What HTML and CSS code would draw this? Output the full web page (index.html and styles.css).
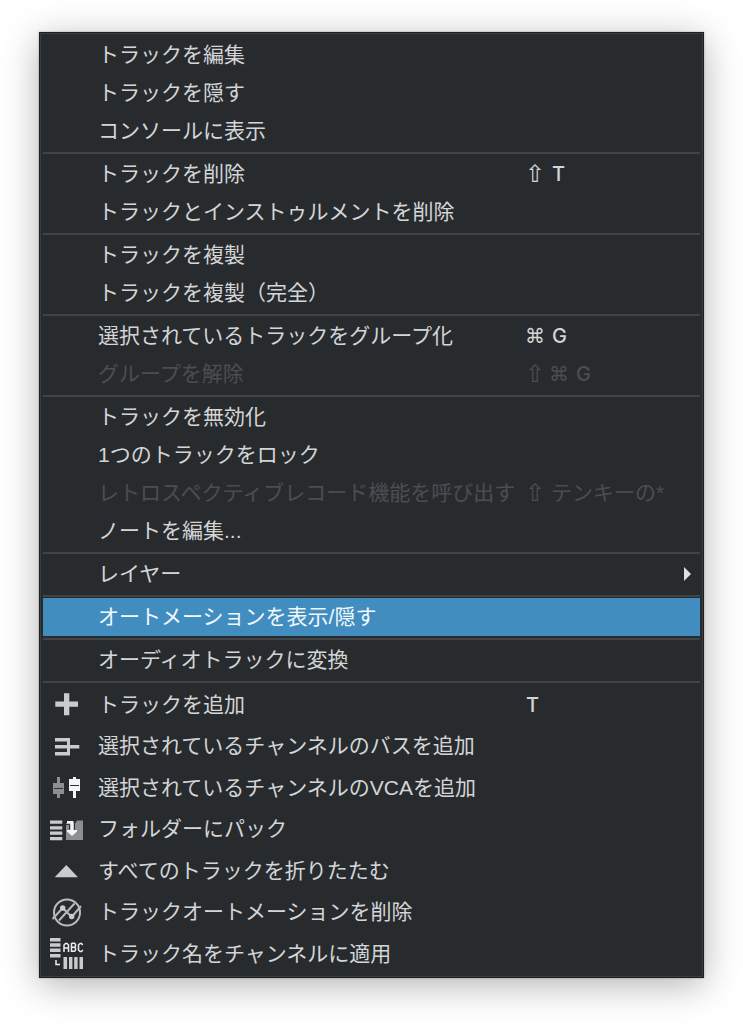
FILE: index.html
```html
<!DOCTYPE html>
<html lang="ja">
<head>
<meta charset="utf-8">
<meta name="viewport" content="width=device-width, initial-scale=1">
<title>トラックメニュー</title>
<link rel="stylesheet" href="styles.css">
</head>
<body>
<main class="menu">
  <section class="group">
    <button class="item"><span class="label">トラックを編集</span></button>
    <button class="item"><span class="label">トラックを隠す</span></button>
    <button class="item"><span class="label">コンソールに表示</span></button>
  </section>
  <section class="group">
    <button class="item"><span class="label">トラックを削除</span><span class="keys"><span class="sym shift">⇧</span><span class="key">T</span></span></button>
    <button class="item"><span class="label">トラックとインストゥルメントを削除</span></button>
  </section>
  <section class="group">
    <button class="item"><span class="label">トラックを複製</span></button>
    <button class="item"><span class="label">トラックを複製（完全）</span></button>
  </section>
  <section class="group">
    <button class="item"><span class="label">選択されているトラックをグループ化</span><span class="keys"><span class="sym">⌘</span><span class="key">G</span></span></button>
    <button class="item" disabled><span class="label">グループを解除</span><span class="keys"><span class="sym shift">⇧</span><span class="sym">⌘</span><span class="key">G</span></span></button>
  </section>
  <section class="group">
    <button class="item"><span class="label">トラックを無効化</span></button>
    <button class="item"><span class="label">1つのトラックをロック</span></button>
    <button class="item" disabled><span class="label">レトロスペクティブレコード機能を呼び出す</span><span class="keys"><span class="sym shift">⇧</span><span>テンキーの*</span></span></button>
    <button class="item"><span class="label">ノートを編集...</span></button>
  </section>
  <section class="group">
    <button class="item"><span class="label">レイヤー</span><svg class="arrow" viewBox="0 0 7 14" aria-hidden="true"><path d="M0 0L7 7L0 14Z"/></svg></button>
  </section>
  <section class="group">
    <button class="item selected"><span class="label">オートメーションを表示/隠す</span></button>
  </section>
  <section class="group">
    <button class="item"><span class="label">オーディオトラックに変換</span></button>
  </section>
  <section class="group tools">
    <button class="item">
      <svg class="icon" viewBox="0 0 44 41" aria-hidden="true"><path d="M21 9.3h5.3v8.2H35v5.3h-8.7v8.5H21v-8.5h-8.7v-5.3H21z"/></svg>
      <span class="label">トラックを追加</span><span class="keys"><span class="key">T</span></span></button>
    <button class="item">
      <svg class="icon" viewBox="0 0 44 41" aria-hidden="true"><path d="M12 12h15v7h9.300v3.500H27V29.500H12V26h12v-3.500H12V19h12v-3.500H12z"/></svg>
      <span class="label">選択されているチャンネルのバスを追加</span></button>
    <button class="item">
      <svg class="icon" viewBox="0 0 44 41" aria-hidden="true"><path class="mid" d="M14 10h3v6h4v11h-4v4h-3v-4h-4V16h4z"/><path class="white" d="M30 10h3v2h4v12h-4v7h-3v-7h-4V12h4z"/><path class="cut" d="M11 21.500h9M27 18.500h9"/></svg>
      <span class="label">選択されているチャンネルのVCAを追加</span></button>
    <button class="item">
      <svg class="icon" viewBox="0 0 44 41" aria-hidden="true"><path d="M7 11.500h12.300v3.200H7zM7 17.200h12.300v3.200H7zM7 22.600h12.300v3.200H7zM7 28h12.300v3.200H7z"/><path class="mid" d="M23 14h9.500l1.500-2.500h6V31H23z"/><path class="cut" d="M23 15.500h3.500v5M31.500 11v10"/><path class="white" d="M24 12h6.500v9H34v1.500L29 27l-5-4.500V21h3.500v-6.500H24z"/></svg>
      <span class="label">フォルダーにパック</span></button>
    <button class="item">
      <svg class="icon" viewBox="0 0 44 41" aria-hidden="true"><path d="M11.7 27.3L23.3 15L35 27.3Z"/></svg>
      <span class="label">すべてのトラックを折りたたむ</span></button>
    <button class="item">
      <svg class="icon" viewBox="0 0 44 41" aria-hidden="true"><circle class="ring" cx="24" cy="20.500" r="13"/><path class="line" d="M9.500 27L19.700 16L28.700 25L38 14M16 28.500L31.500 11.500"/><circle cx="19.700" cy="16" r="2.700"/><circle cx="28.700" cy="24.500" r="2.700"/></svg>
      <span class="label">トラックオートメーションを削除</span></button>
    <button class="item">
      <svg class="icon" viewBox="0 0 44 41" aria-hidden="true"><path d="M7 5h10.500v3.400H7zM7 10.300h10.500v3.400H7zM7 15.600h10.500v3.400H7zM7 21h10.500v3.400H7zM20.500 24h3.600v12h-3.600zM26 24h3.400v12H26zM31.200 24h3.400v12h-3.400zM36.500 24H40v12h-3.500z"/><path class="pixel" d="M13 27v4.500h4M21 19v-7l1.500-1.500h1.500l1.500 1.500V19M21 15h4.500M28.500 10v8.300h3l1-1v-2l-1-1l1-1v-2l-1-1h-3M28.500 14.300h3M39.800 12L38.500 10.500h-1.500l-1.500 1.500v5l1.500 1.500h1.500l1.300-1.500"/></svg>
      <span class="label">トラック名をチャンネルに適用</span></button>
  </section>
</main>
</body>
</html>
```
FILE: styles.css
```css
* {
  box-sizing: border-box;
}

body {
  margin: 0;
  padding: 32px 39px 46px;
  background: #fff;
  font-family: "Liberation Sans", "Noto Sans CJK JP", sans-serif;
}

.menu {
  padding: 3px;
  border: 1px solid #1d1e20;
  background: #282b2e;
  box-shadow: inset 0 0 0 1px #3a3c3f, 0 7px 34px rgba(0, 0, 0, 0.3), 0 0 2px rgba(0, 0, 0, 0.3);
}

.group + .group::before {
  content: "";
  display: block;
  height: 2px;
  margin: 2px 0 1px;
  background: #414447;
}

.item {
  display: grid;
  grid-template-columns: 55px 427px 1fr;
  align-items: center;
  width: 100%;
  height: 38px;
  padding: 0;
  border: 0;
  background: transparent;
  color: #d3d5d7;
  font: inherit;
  font-size: 21px;
  line-height: 30px;
  text-align: left;
  white-space: nowrap;
}

.item:disabled {
  color: #4b4e51;
}

.selected {
  background: #418dc0;
  color: #f2f8fc;
}

.tools .item {
  height: 41px;
}

.tools .item:nth-child(even) {
  height: 42px;
}

.label {
  grid-column: 2;
}

.keys {
  grid-column: 3;
  display: flex;
  align-items: center;
  gap: 8px;
}

.key {
  padding-left: 1px;
  font-family: Inter, sans-serif;
  font-size: 20px;
  font-weight: 500;
}

.sym {
  width: 18px;
  font-family: "DejaVu Sans", sans-serif;
  font-size: 20px;
}

.shift {
  font-size: 24px;
}

.shift + .sym {
  margin-left: -2px;
}

.arrow {
  grid-column: 3;
  justify-self: end;
  width: 7px;
  height: 14px;
  margin-right: 9px;
  fill: #dedfe0;
}

.icon {
  width: 44px;
  height: 41px;
  fill: #cbcbcb;
}

.mid {
  fill: #8d8e90;
}

.white {
  fill: #f4f4f4;
}

.cut {
  fill: none;
  stroke: #303335;
}

.ring,
.line {
  fill: none;
  stroke: #b9babb;
  stroke-width: 2;
}

.pixel {
  fill: none;
  stroke: #ededed;
  stroke-width: 1.5;
}
```
